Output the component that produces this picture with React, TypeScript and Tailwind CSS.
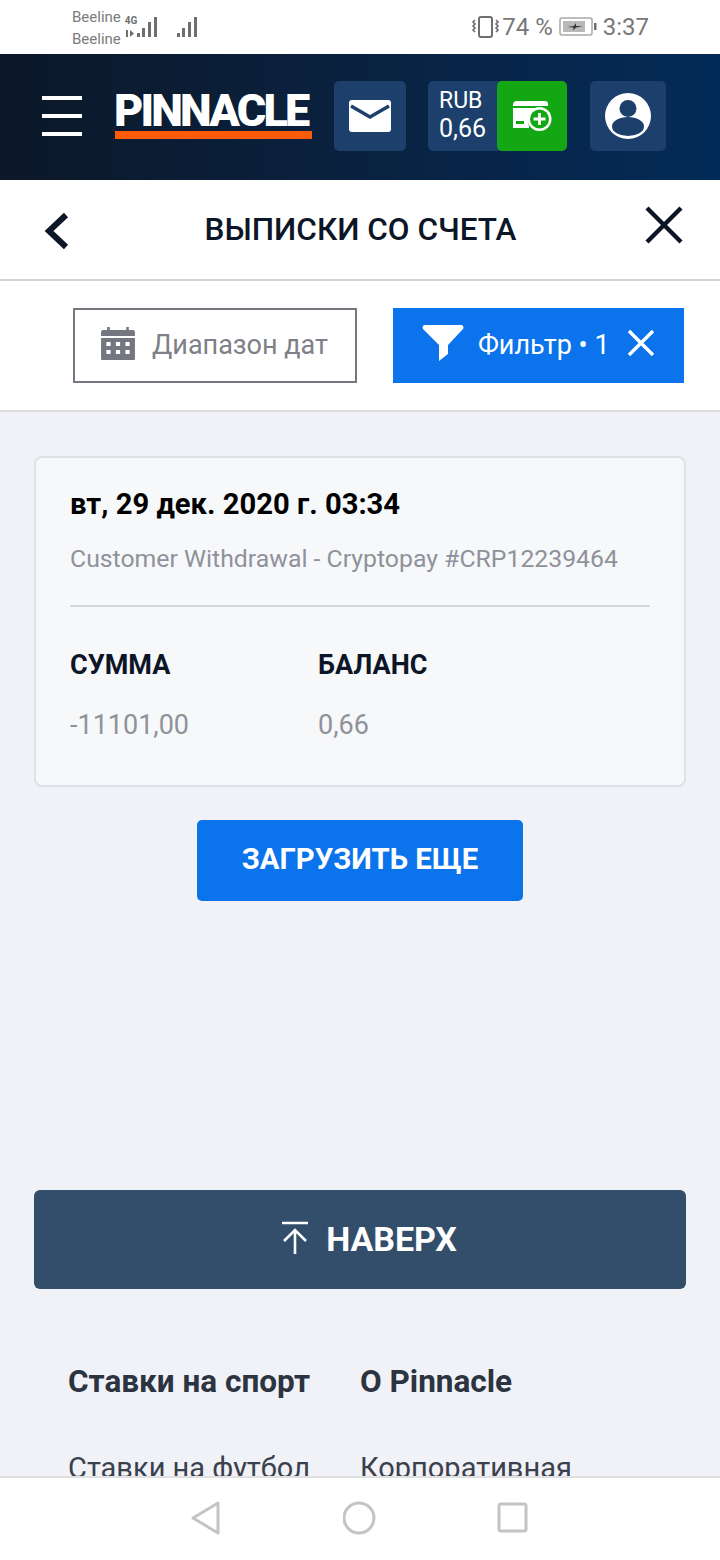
import React from "react";

const Signal = ({ x = 0 }: { x?: number }) => (
  <g fill="#6f6f6f" transform={`translate(${x} 0)`}>
    <rect x="0" y="33" width="3" height="4" />
    <rect x="5" y="28" width="3" height="9" />
    <rect x="11" y="22" width="3" height="15" />
    <rect x="17" y="17" width="3" height="20" />
  </g>
);

const Mail = () => (
  <svg width="42" height="32" viewBox="0 0 42 32">
    <rect width="42" height="32" rx="3" fill="#fff" />
    <path d="M2 6 L21 17 L40 6" fill="none" stroke="#1c3f6b" strokeWidth="3.4" />
  </svg>
);

const Wallet = () => (
  <svg width="40" height="32" viewBox="0 0 40 32">
    <path d="M1 5 a4 4 0 0 1 4-4 H33 a3 3 0 0 1 3 3 V6 H1 Z" fill="#fff" />
    <path d="M1 8 H30 A13 13 0 0 0 17 26 V28 H1 Z" fill="#fff" />
    <rect x="4" y="21" width="8" height="3" fill="#14a714" />
    <circle cx="27.5" cy="19" r="12" fill="#fff" />
    <circle cx="27.5" cy="19" r="9.5" fill="#14a714" />
    <path d="M27.5 13 V25 M21.5 19 H33.5" stroke="#fff" strokeWidth="2.8" />
  </svg>
);

const User = () => (
  <svg width="46" height="46" viewBox="0 0 46 46">
    <circle cx="23" cy="23" r="23" fill="#fff" />
    <circle cx="23" cy="15.5" r="8.5" fill="#1c3f6b" />
    <ellipse cx="23" cy="33.5" rx="16" ry="9.5" fill="#1c3f6b" />
  </svg>
);

const Box = ({ children, cls }: { children: React.ReactNode; cls: string }) => (
  <div className={`flex h-[70px] items-center justify-center rounded-[5px] bg-[#1c3f6b] ${cls}`}>{children}</div>
);

const Footer = ({ title, link, cls }: { title: string; link: string; cls: string }) => (
  <div className={cls}>
    <div className="text-[31.5px] font-bold leading-[36px] whitespace-nowrap text-[#2d3441]">{title}</div>
    <div className="mt-[50px] text-[29px] leading-[36px] whitespace-nowrap text-[#3a404c]">{link}</div>
  </div>
);

export default function App() {
  return (
    <div className="flex h-[1560px] w-[720px] flex-col overflow-hidden bg-[#f0f2f7] font-['Roboto',sans-serif]">
      <div className="flex h-[54px] shrink-0 items-start bg-white pl-[72px] text-[#777]">
        <div className="mt-[6px] flex flex-col text-[15px] leading-[22px] text-[#7c7c7c]">
          <span>Beeline</span>
          <span>Beeline</span>
        </div>
        <div className="relative ml-[4px] h-[54px] w-[78px]">
          <span className="absolute left-0 top-[16px] text-[10px] leading-[10px] font-bold text-[#6f6f6f]">4G</span>
          <svg width="78" height="54" viewBox="0 0 78 54" aria-hidden="true">
            <rect x="1" y="30" width="2" height="7" fill="#6f6f6f" />
            <path d="M5 30 V37 L9 33.5 Z" fill="#6f6f6f" />
            <Signal x={12} />
            <Signal x={52} />
          </svg>
        </div>
        <div className="ml-auto flex h-[54px] items-center pr-[71px]">
          <svg width="28" height="24" viewBox="0 0 28 24" aria-hidden="true">
            <rect x="8" y="2" width="13" height="20" rx="2" fill="none" stroke="#6f6f6f" strokeWidth="2" />
            <path d="M4 5 l-2 2 2 2 -2 2 2 2 -2 2 2 2 M25 5 l2 2 -2 2 2 2 -2 2 2 2 -2 2" fill="none" stroke="#6f6f6f" strokeWidth="1.6" />
          </svg>
          <span className="ml-[3px] text-[24px] leading-none whitespace-nowrap text-[#777]">74 %</span>
          <svg width="38" height="20" viewBox="0 0 38 20" className="ml-[6px]" aria-hidden="true">
            <rect x="1" y="1" width="32" height="17" rx="2" fill="none" stroke="#a8a8a8" strokeWidth="1.5" />
            <rect x="4" y="4" width="22" height="11" fill="#b9b9b9" />
            <path d="M8 10 L15 9 L17 6 L17 9 L24 9 L17 10.5 L14 13.5 L14.5 10.5 Z" fill="#333" />
            <rect x="35" y="6" width="2.5" height="7" fill="#6f6f6f" />
          </svg>
          <span className="ml-[6px] text-[24px] leading-none text-[#777]">3:37</span>
        </div>
      </div>

      <header className="flex h-[126px] shrink-0 items-center bg-gradient-to-r from-[#0c1829] to-[#032b58] pb-[2px] pl-[42px]">
        <div className="flex w-[40px] flex-col gap-[14px]">
          <div className="h-[4px] bg-white" />
          <div className="h-[4px] bg-white" />
          <div className="h-[4px] bg-white" />
        </div>
        <div className="ml-[33px] flex w-[197px] flex-col">
          <div className="-ml-[1px] h-[33px] text-[45px] leading-[33px] font-black tracking-[-2.8px] whitespace-nowrap text-white">PINNACLE</div>
          <div className="mt-[4px] h-[8px] bg-[#fb5b09]" />
        </div>
        <Box cls="ml-[22px] w-[72px]"><Mail /></Box>
        <div className="ml-[22px] flex h-[70px] w-[139px] overflow-hidden rounded-[5px] bg-[#1c3f6b]">
          <div className="flex w-[69px] flex-col pl-[11px] pt-[6px] text-[25px] leading-[28px] text-white">
            <span className="text-[23px]">RUB</span>
            <span>0,66</span>
          </div>
          <div className="flex w-[70px] items-center justify-center rounded-[5px] bg-[#14a714]"><Wallet /></div>
        </div>
        <Box cls="ml-[23px] w-[76px]"><User /></Box>
      </header>

      <div className="flex h-[101px] shrink-0 items-center justify-between border-b-2 border-[#d2d3d8] bg-white pl-[44px] pr-[37px]">
        <svg width="26" height="38" viewBox="0 0 26 38" className="mt-[2px]" aria-hidden="true">
          <path d="M22 3 L5 19 L22 35" fill="none" stroke="#0d1626" strokeWidth="6" />
        </svg>
        <div className="pl-[6px] text-[31.5px] font-medium whitespace-nowrap text-[#0d1626]">ВЫПИСКИ СО СЧЕТА</div>
        <svg width="38" height="38" viewBox="0 0 38 38" className="-mt-[10px]" aria-hidden="true">
          <path d="M2 2 L36 36 M36 2 L2 36" fill="none" stroke="#0d1626" strokeWidth="4.4" />
        </svg>
      </div>

      <div className="flex h-[131px] shrink-0 items-center border-b-2 border-[#dcdde1] bg-white pl-[73px]">
        <div className="flex h-[75px] w-[284px] items-center border-2 border-[#74777f] pl-[25px]">
          <svg width="36" height="34" viewBox="1 0 34 34" preserveAspectRatio="none" className="-mt-[4px]" aria-hidden="true">
            <path d="M2 5 a2 2 0 0 1 2-2 H32 a2 2 0 0 1 2 2 V9 H2 Z" fill="#74777f" />
            <path d="M2 11 H34 V32 a1 1 0 0 1-1 1 H3 a1 1 0 0 1-1-1 Z" fill="#74777f" />
            <path d="M9 0 V6 M27 0 V6" stroke="#74777f" strokeWidth="2.5" fill="none" />
            <g fill="#fff">
              <rect x="7" y="15" width="4" height="4" /><rect x="16" y="15" width="4" height="4" /><rect x="25" y="15" width="4" height="4" />
              <rect x="7" y="23" width="4" height="4" /><rect x="16" y="23" width="4" height="4" /><rect x="25" y="23" width="4" height="4" />
            </g>
          </svg>
          <span className="ml-[16px] text-[27px] whitespace-nowrap text-[#7d8087]">Диапазон дат</span>
        </div>
        <div className="ml-[36px] flex h-[75px] w-[291px] items-center bg-[#0b73eb] pl-[29px]">
          <svg width="42" height="36" viewBox="0 0 42 36" className="-mt-[6px]" aria-hidden="true">
            <path d="M3 0 H39 a2.5 2.5 0 0 1 2 4 L26 20 V29 L17 36 V20 L1 4 a2.5 2.5 0 0 1 2-4 Z" fill="#fff" />
          </svg>
          <span className="ml-[14px] text-[27px] whitespace-nowrap text-white">Фильтр • 1</span>
          <svg width="28" height="28" viewBox="0 0 28 28" className="-mt-[5px] ml-[17px]" aria-hidden="true">
            <path d="M2 2 L26 26 M26 2 L2 26" fill="none" stroke="#fff" strokeWidth="3.4" />
          </svg>
        </div>
      </div>

      <main className="flex shrink-0 flex-col items-center pt-[44px]">
        <div className="h-[331px] w-[652px] rounded-[8px] border-2 border-[#dfe1e6] bg-[#f7f8fa] px-[34px]">
          <div className="mt-[27px] text-[29.2px] leading-[38px] font-bold whitespace-nowrap text-black">вт, 29 дек. 2020 г. 03:34</div>
          <div className="mt-[20px] border-b-2 border-[#d5d6da] pb-[30px] text-[24.8px] leading-[32px] whitespace-nowrap text-[#8f929a]">Customer Withdrawal - Cryptopay #CRP12239464</div>
          <div className="mt-[41px] flex">
            <div className="w-[248px]">
              <div className="text-[27px] leading-[34px] font-bold text-[#0d1626]">СУММА</div>
              <div className="mt-[26px] text-[27px] leading-[34px] text-[#8f929a]">-11101,00</div>
            </div>
            <div>
              <div className="text-[27px] leading-[34px] font-bold text-[#0d1626]">БАЛАНС</div>
              <div className="mt-[26px] text-[27px] leading-[34px] text-[#8f929a]">0,66</div>
            </div>
          </div>
        </div>
        <div className="mt-[33px] flex h-[81px] w-[326px] items-center justify-center rounded-[5px] bg-[#0b73eb] pb-[2px] text-[29.3px] font-bold text-white">ЗАГРУЗИТЬ ЕЩЕ</div>
        <div className="mt-[289px] flex h-[99px] w-[652px] items-center justify-center rounded-[6px] bg-[#334e6b] pl-[18px]">
          <svg width="28" height="34" viewBox="0 0 28 34" className="-mt-[4px]" aria-hidden="true">
            <path d="M1 2 H27 M14 33 V9 M3 20 L14 9 L25 20" fill="none" stroke="#fff" strokeWidth="2.6" />
          </svg>
          <span className="ml-[17px] text-[34px] font-bold text-white">НАВЕРХ</span>
        </div>
      </main>

      <footer className="flex min-h-0 flex-1 overflow-hidden pl-[68px] pt-[75px]">
        <Footer cls="w-[292px]" title="Ставки на спорт" link="Ставки на футбол" />
        <Footer cls="" title="О Pinnacle" link="Корпоративная" />
      </footer>

      <nav className="flex h-[84px] shrink-0 items-center border-t-2 border-[#e0e0e3] bg-white pb-[2px] pl-[190px]">
        <svg width="32" height="36" viewBox="0 0 32 36" aria-hidden="true">
          <path d="M28 3 V33 L3 18 Z" fill="none" stroke="#c4c4c4" strokeWidth="3" strokeLinejoin="round" />
        </svg>
        <svg width="34" height="34" viewBox="0 0 34 34" className="ml-[121px]" aria-hidden="true">
          <circle cx="16" cy="17" r="15" fill="none" stroke="#c4c4c4" strokeWidth="3" />
        </svg>
        <svg width="32" height="32" viewBox="0 0 32 32" className="ml-[120px]" aria-hidden="true">
          <rect x="2" y="2" width="27" height="27" rx="2" fill="none" stroke="#c4c4c4" strokeWidth="3" />
        </svg>
      </nav>
    </div>
  );
}
